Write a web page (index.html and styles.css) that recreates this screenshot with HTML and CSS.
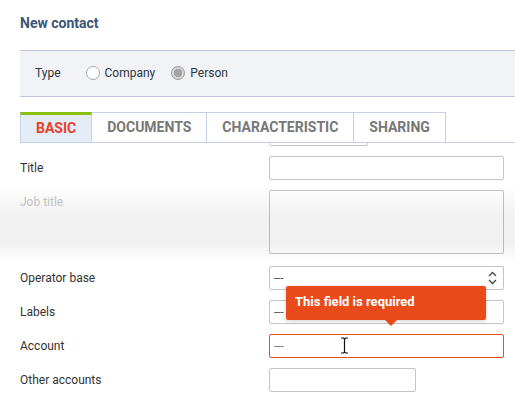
FILE: index.html
```html
<!DOCTYPE html>
<html lang="en">
<head>
  <meta charset="UTF-8">
  <meta name="viewport" content="width=device-width, initial-scale=1.0">
  <title>New contact</title>
  <link rel="stylesheet" href="styles.css">
</head>
<body>
  <div class="page">
    <h1 class="title">New contact</h1>

    <div class="type-bar">
      <span class="type-label">Type</span>
      <label class="radio"><span class="dot"></span>Company</label>
      <label class="radio checked"><span class="dot"></span>Person</label>
    </div>

    <div class="tabs">
      <div class="tab active">BASIC</div>
      <div class="tab">DOCUMENTS</div>
      <div class="tab">CHARACTERISTIC</div>
      <div class="tab">SHARING</div>
    </div>

    <div class="form">
      <div class="row stub">
        <span></span>
        <div class="stub-clip"><div class="field short"></div></div>
      </div>
      <div class="row">
        <label class="label">Title</label>
        <div class="field"></div>
      </div>
      <div class="row top textarea-row">
        <label class="label faded">Job title</label>
        <div class="field area"></div>
      </div>
      <div class="row">
        <label class="label">Operator base</label>
        <div class="field select">
          <span class="value">---</span>
          <svg class="arrows" width="9" height="14" viewBox="0 0 9 14">
            <path d="M1 5 L4.5 1.5 L8 5 M1 9 L4.5 12.5 L8 9" fill="none" stroke="#444" stroke-width="1.3"/>
          </svg>
        </div>
      </div>
      <div class="row">
        <label class="label">Labels</label>
        <div class="field holder">
          <span class="value">---</span>
          <div class="tooltip">This field is required</div>
        </div>
      </div>
      <div class="row">
        <label class="label">Account</label>
        <div class="field error holder">
          <span class="value light">---</span>
          <svg class="cursor" width="9" height="17" viewBox="0 0 9 17">
            <path d="M1 1 H3.5 L4.5 2 L5.5 1 H8 M4.5 2 V15 M1 16 H3.5 L4.5 15 L5.5 16 H8" fill="none" stroke="#111" stroke-width="1.2"/>
          </svg>
        </div>
      </div>
      <div class="row">
        <label class="label">Other accounts</label>
        <div class="field short"></div>
      </div>

      <div class="fade"></div>
    </div>
  </div>
</body>
</html>
```

FILE: styles.css
```css
body {
  margin: 0;
  background-color: #fff;
  font-family: Roboto, "Liberation Sans", Arial, sans-serif;
  color: #333;
}
.page {
  padding-left: 20px;
}
.title {
  margin: 0;
  height: 50px;
  padding-top: 15px;
  box-sizing: border-box;
  font-size: 14px;
  line-height: 16px;
  font-weight: bold;
  color: #3b5576;
}
.type-bar {
  display: flex;
  align-items: center;
  height: 47px;
  box-sizing: border-box;
  padding-left: 15px;
  padding-bottom: 1px;
  background-color: #f1f3f7;
  border-top: 1px solid #b9c6dd;
  border-bottom: 1px solid #b9c6dd;
  font-size: 12px;
  color: #2c3646;
}
.type-label {
  margin-right: 25px;
}
.radio {
  display: flex;
  align-items: center;
  margin-right: 16px;
}
.dot {
  width: 14px;
  height: 14px;
  box-sizing: border-box;
  border: 1px solid #a9a9a9;
  border-radius: 50%;
  background-color: #fff;
  margin-right: 5px;
}
.radio.checked .dot {
  border-color: #9a9a9a;
  background: radial-gradient(circle, #a3a3a3 0 4px, #d6d6d6 4.5px);
}
.tabs {
  display: flex;
  margin-top: 15px;
  height: 31px;
  box-sizing: border-box;
  border-bottom: 1px solid #c3d1e6;
}
.tab {
  height: 30px;
  box-sizing: border-box;
  padding: 0 15px;
  border-top: 1px solid #c3d1e6;
  border-right: 1px solid #c3d1e6;
  font-size: 14px;
  font-weight: bold;
  line-height: 29px;
  color: #777;
}
.tab:first-child {
  border-left: 1px solid #c3d1e6;
}
.tab.active {
  border-top: 3px solid #8cc00e;
  line-height: 27px;
  background-color: #e4ecf6;
  color: #e8412c;
}
.form {
  position: relative;
  display: flex;
  flex-direction: column;
  gap: 10px;
  padding-right: 11px;
}
.row {
  display: grid;
  grid-template-columns: 249px 1fr;
  align-items: center;
}
.row.top {
  align-items: start;
}
.textarea-row {
  margin-bottom: 2px;
}
.label {
  font-size: 12px;
  line-height: 23px;
  padding-top: 1px;
  color: #333;
}
.label.faded {
  color: #c6c6c6;
}
.stub-clip {
  height: 3px;
  overflow: hidden;
  display: flex;
  align-items: flex-end;
}
.field {
  height: 24px;
  box-sizing: border-box;
  border: 1px solid #c4c4c4;
  border-radius: 2px;
  background-color: #fff;
  display: flex;
  align-items: center;
  padding-left: 4px;
}
.field.short {
  width: 147px;
  flex: none;
}
.stub .field.short {
  width: 99px;
}
.field.area {
  height: 64px;
}
.field.error {
  border-color: #e84e1c;
}
.holder {
  position: relative;
}
.value {
  font-size: 12px;
  color: #555;
  letter-spacing: -0.2px;
}
.value.light {
  color: #777;
}
.select {
  justify-content: space-between;
  padding-right: 6px;
}
.tooltip {
  position: absolute;
  top: -15px;
  left: 16px;
  width: 200px;
  height: 34px;
  box-sizing: border-box;
  padding-left: 9px;
  background-color: #e84a1a;
  border-radius: 2px;
  box-shadow: 0 1px 4px rgba(0, 0, 0, 0.2);
  color: #fff;
  font-size: 13px;
  font-weight: bold;
  line-height: 32px;
  z-index: 2;
}
.tooltip::after {
  content: "";
  position: absolute;
  left: 99px;
  bottom: -6px;
  border-left: 6px solid transparent;
  border-right: 6px solid transparent;
  border-top: 6px solid #e84a1a;
}
.cursor {
  position: absolute;
  left: 70px;
  top: 2px;
}
.fade {
  position: absolute;
  left: -20px;
  right: 0;
  top: 42px;
  height: 78px;
  pointer-events: none;
  background: linear-gradient(to bottom, rgba(0, 0, 0, 0) 0%, rgba(0, 0, 0, 0.05) 38%, rgba(0, 0, 0, 0.06) 72%, rgba(0, 0, 0, 0) 100%);
}
```
